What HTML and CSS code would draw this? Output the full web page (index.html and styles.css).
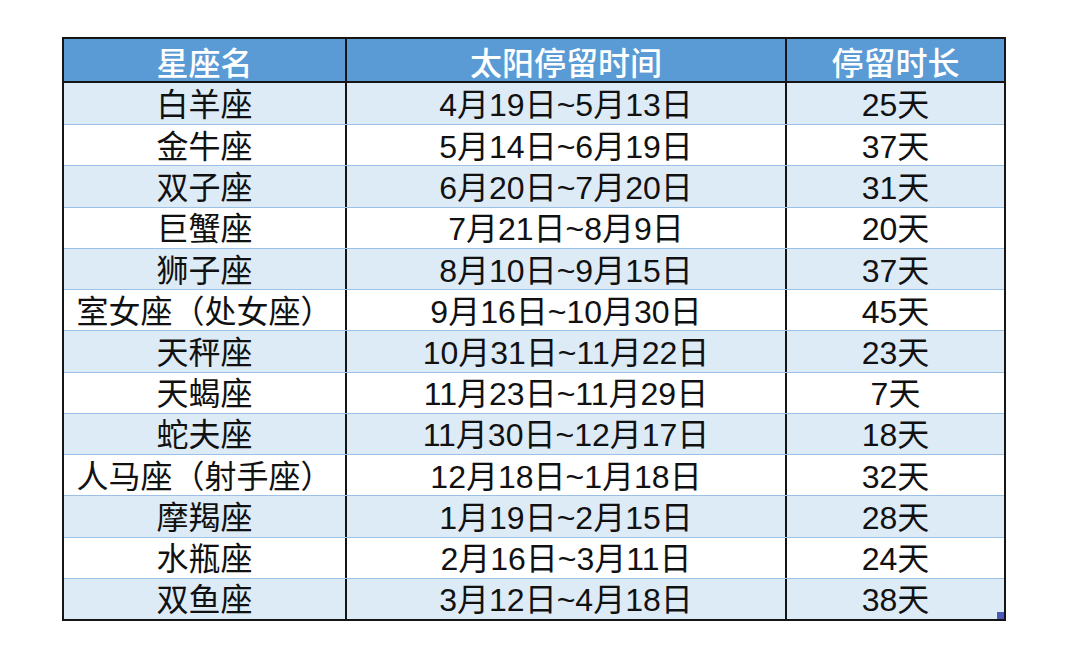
FILE: index.html
```html
<!DOCTYPE html>
<html lang="zh-CN">
<head>
<meta charset="utf-8">
<title>星座太阳停留时间</title>
<link rel="stylesheet" href="styles.css">
</head>
<body>
<div class="sheet">
  <div class="row head">
    <div class="cell">星座名</div>
    <div class="cell">太阳停留时间</div>
    <div class="cell">停留时长</div>
  </div>
  <div class="body">
    <div class="row alt"><div class="cell">白羊座</div><div class="cell">4月19日~5月13日</div><div class="cell">25天</div></div>
    <div class="row"><div class="cell">金牛座</div><div class="cell">5月14日~6月19日</div><div class="cell">37天</div></div>
    <div class="row alt"><div class="cell">双子座</div><div class="cell">6月20日~7月20日</div><div class="cell">31天</div></div>
    <div class="row"><div class="cell">巨蟹座</div><div class="cell">7月21日~8月9日</div><div class="cell">20天</div></div>
    <div class="row alt"><div class="cell">狮子座</div><div class="cell">8月10日~9月15日</div><div class="cell">37天</div></div>
    <div class="row"><div class="cell">室女座（处女座）</div><div class="cell">9月16日~10月30日</div><div class="cell">45天</div></div>
    <div class="row alt"><div class="cell">天秤座</div><div class="cell">10月31日~11月22日</div><div class="cell">23天</div></div>
    <div class="row"><div class="cell">天蝎座</div><div class="cell">11月23日~11月29日</div><div class="cell">7天</div></div>
    <div class="row alt"><div class="cell">蛇夫座</div><div class="cell">11月30日~12月17日</div><div class="cell">18天</div></div>
    <div class="row"><div class="cell">人马座（射手座）</div><div class="cell">12月18日~1月18日</div><div class="cell">32天</div></div>
    <div class="row alt"><div class="cell">摩羯座</div><div class="cell">1月19日~2月15日</div><div class="cell">28天</div></div>
    <div class="row"><div class="cell">水瓶座</div><div class="cell">2月16日~3月11日</div><div class="cell">24天</div></div>
    <div class="row alt"><div class="cell">双鱼座</div><div class="cell">3月12日~4月18日</div><div class="cell">38天</div></div>
  </div>
  <span class="handle"></span>
</div>
</body>
</html>
```
FILE: styles.css
```css
html, body {
  margin: 0;
  padding: 0;
  background: #ffffff;
}
body {
  font-family: "Liberation Sans", "Noto Sans CJK SC", sans-serif;
  color: #111111;
}
.sheet {
  position: relative;
  margin: 37px 0 0 62px;
  width: 940px;
  border: 2px solid #151515;
  display: flex;
  flex-direction: column;
}
.row {
  display: grid;
  grid-template-columns: 281px 440px 219px;
}
.cell {
  display: flex;
  align-items: center;
  justify-content: center;
  font-size: 32px;
  line-height: 1;
  white-space: nowrap;
  padding-top: 3px;
  box-sizing: border-box;
}
.cell + .cell {
  border-left: 2px solid #151515;
}
.head {
  height: 42px;
  background: #5b9bd5;
  border-bottom: 2px solid #151515;
}
.head .cell {
  color: #ffffff;
  font-family: "Noto Sans CJK SC", sans-serif;
  font-weight: 500;
  padding-top: 2px;
}
.body {
  height: 536px;
  display: grid;
  grid-template-rows: repeat(13, 1fr);
}
.body .row + .row {
  border-top: 1px solid #9bc2e6;
}
.alt {
  background: #ddebf7;
}
.handle {
  position: absolute;
  right: 0;
  bottom: 0;
  width: 7px;
  height: 7px;
  background: #4a5ab8;
}
```
